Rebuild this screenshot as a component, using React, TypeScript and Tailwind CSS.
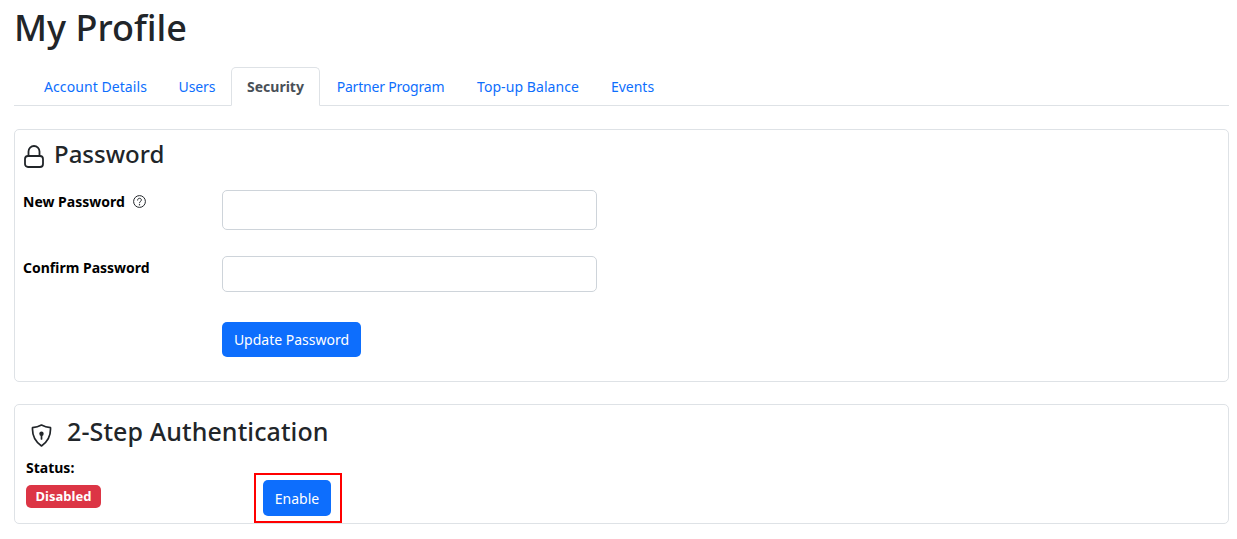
import React from 'react';

const tabs = [
  { label: 'Account Details', cls: 'w-[135px] tracking-[0.07px]' },
  { label: 'Users', cls: 'w-[68px] tracking-[-0.1px]' },
  { label: 'Security', cls: 'w-[89px]' },
  { label: 'Partner Program', cls: 'w-[141px] tracking-[-0.2px]' },
  { label: 'Top-up Balance', cls: 'w-[134px] tracking-[0.07px]' },
  { label: 'Events', cls: 'w-[75px]' },
];

const LockIcon = () => (
  <svg className="mt-[15px] ml-[1px]" width="20" height="23" viewBox="0 0 20 23" fill="none" stroke="#212529" strokeWidth="1.8">
    <rect x="1" y="11" width="18" height="11" rx="3" />
    <path d="M4.500 11V6.500a5.500 5.500 0 0 1 11 0V11" />
  </svg>
);

const ShieldIcon = () => (
  <svg className="mt-[19px]" width="21" height="23" viewBox="0 0 21 23" fill="none" stroke="#212529" strokeWidth="1.7">
    <path d="M10.500 1c2.600 1.500 5.600 2.400 9 2.700.4 7.800-2.500 14-9 18.300C4 17.700 1.100 11.500 1.500 3.700c3.400-.3 6.400-1.200 9-2.700z" strokeLinejoin="round" />
    <circle cx="10.500" cy="9.800" r="2.200" fill="#212529" stroke="none" />
    <path d="M10.500 10.500v4.500" strokeLinecap="round" />
  </svg>
);

const HelpIcon = () => (
  <svg width="13" height="13" viewBox="0 0 13 13" fill="none" stroke="#212529" strokeWidth="1">
    <circle cx="6.500" cy="6.500" r="5.900" />
    <path d="M4.600 5.100c0-1.100.8-1.800 1.900-1.800s1.900.7 1.900 1.700c0 1.300-1.900 1.400-1.900 2.800" strokeLinecap="round" />
    <circle cx="6.500" cy="9.800" r="0.700" fill="#212529" stroke="none" />
  </svg>
);

export default function App() {
  return (
    <div className="min-h-[539px] overflow-hidden bg-white pr-[8px] pl-[14px] font-['Noto_Sans',sans-serif] text-[#212529]">
      <h1 className="h-[67px] pt-[5px] text-[36px] leading-[46px] font-medium">My Profile</h1>

      <div className="flex h-[39px] border-b border-[#dee2e6] pl-[14px] text-[14px]">
        {tabs.map((t) =>
          t.label === 'Security' ? (
            <div
              key={t.label}
              className={`${t.cls} h-[39px] rounded-t-[5px] border border-[#dee2e6] border-b-white bg-white pt-[8px] text-center font-bold text-[#495057]`}
            >
              {t.label}
            </div>
          ) : (
            <div key={t.label} className={`${t.cls} pt-[9px] text-center text-[#0d6efd]`}>
              {t.label}
            </div>
          ),
        )}
      </div>

      <section className="mt-[23px] h-[253px] rounded-[5px] border border-[#dee2e6] px-[8px]">
        <div className="flex h-[60px] items-start gap-[10px]">
          <LockIcon />
          <h2 className="pt-[8px] text-[24px] leading-[32px] font-medium">Password</h2>
        </div>
        <div className="flex h-[66px]">
          <label className="flex h-[22px] w-[199px] items-center gap-[8px] text-[14px] font-bold text-black">
            New Password <HelpIcon />
          </label>
          <input type="password" className="h-[40px] w-[375px] rounded-[5px] border border-[#ced4da]" />
        </div>
        <div className="flex h-[66px]">
          <label className="flex h-[22px] w-[199px] items-center text-[14px] font-bold text-black">
            Confirm Password
          </label>
          <input type="password" className="h-[36px] w-[375px] rounded-[5px] border border-[#ced4da]" />
        </div>
        <div className="pl-[199px]">
          <button className="h-[35px] w-[139px] rounded-[5px] bg-[#0d6efd] text-[14px] text-white">
            Update Password
          </button>
        </div>
      </section>

      <section className="mt-[22px] h-[120px] rounded-[5px] border border-[#dee2e6] pl-[11px]">
        <div className="flex h-[54px] items-start gap-[15px] pl-[5px]">
          <ShieldIcon />
          <h2 className="pt-[10px] text-[25px] leading-[32px] font-medium tracking-[0.1px]">2-Step Authentication</h2>
        </div>
        <div className="flex">
          <div className="w-[228px]">
            <div className="h-[26px] text-[14px] leading-[18px] font-bold text-black">Status:</div>
            <span className="flex h-[23px] w-[75px] items-center justify-center rounded-[5px] bg-[#dc3545] pt-[1px] text-[13px] font-bold text-white">
              Disabled
            </span>
          </div>
          <div className="mt-[14px] h-[50px] border-2 border-[#ff0000] pt-[5px] pr-[9px] pl-[7px]">
            <button className="block h-[36px] w-[68px] rounded-[5px] bg-[#0d6efd] text-[14px] text-white">
              Enable
            </button>
          </div>
        </div>
      </section>
    </div>
  );
}
